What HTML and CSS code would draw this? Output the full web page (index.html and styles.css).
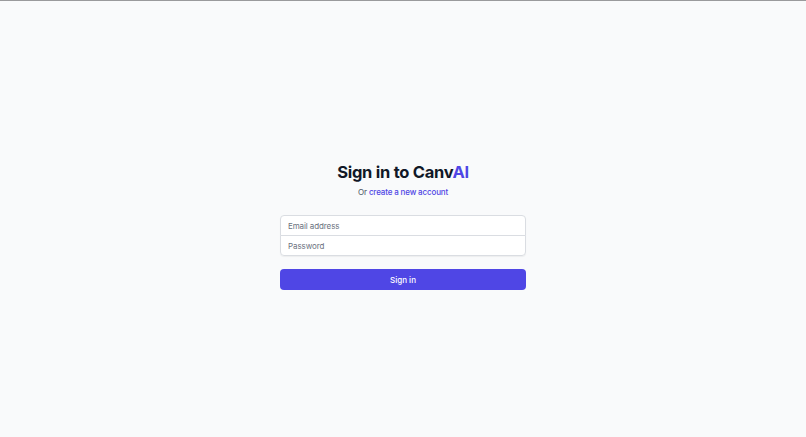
FILE: index.html
```html
<!DOCTYPE html>
<html lang="en">
<head>
    <meta charset="UTF-8">
    <title>Sign in to CanvAI</title>
    <link rel="stylesheet" href="styles.css">
</head>
<body>

<div class="page">
    <div class="panel">
        <h2 class="title">Sign in to Canv<span class="brand">AI</span></h2>
        <p class="subtitle">Or <a href="#">create a new account</a></p>

        <form class="form" onsubmit="return false">
            <div class="fields">
                <input type="email" class="field field-top" placeholder="Email address">
                <input type="password" class="field field-bottom" placeholder="Password">
            </div>
            <button type="submit" class="submit">Sign in</button>
        </form>
    </div>
</div>

</body>
</html>
```

FILE: styles.css
```css
* {
    box-sizing: border-box;
}
body {
    margin: 0;
    font-family: Inter, "Noto Sans", sans-serif;
    background-color: #f9fafb;
    border-top: 1px solid #9a9a9c;
}
.page {
    height: 436px;
    display: flex;
    align-items: center;
    justify-content: center;
}
.panel {
    width: 246px;
    margin-top: 14px;
}
.title {
    margin: 0;
    text-align: center;
    font-size: 16.5px;
    font-weight: 700;
    color: #111827;
    letter-spacing: -0.25px;
    line-height: 20px;
}
.brand {
    color: #4f46e5;
}
.subtitle {
    margin: 4px 0 0;
    text-align: center;
    font-size: 8px;
    color: #4b5563;
    line-height: 12px;
    letter-spacing: -0.15px;
}
.subtitle a {
    color: #4f46e5;
    font-weight: 500;
    text-decoration: none;
}
.form {
    margin-top: 17px;
}
.fields {
    border-radius: 4px;
    box-shadow: 0 1px 1px rgba(0, 0, 0, 0.05);
}
.field {
    display: block;
    width: 100%;
    height: 21px;
    padding: 0 7px;
    border: 1px solid #dadde2;
    background: #fff;
    font-family: inherit;
    font-size: 8px;
    letter-spacing: -0.1px;
    color: #111827;
    outline: none;
}
.field::placeholder {
    color: #6b7280;
}
.field-top {
    border-radius: 4px 4px 0 0;
}
.field-bottom {
    margin-top: -1px;
    border-radius: 0 0 4px 4px;
}
.submit {
    display: block;
    width: 100%;
    height: 21px;
    margin-top: 13px;
    border: none;
    border-radius: 4px;
    background-color: #4f46e5;
    color: #fff;
    font-family: inherit;
    font-size: 8px;
    font-weight: 500;
    cursor: pointer;
}
```
